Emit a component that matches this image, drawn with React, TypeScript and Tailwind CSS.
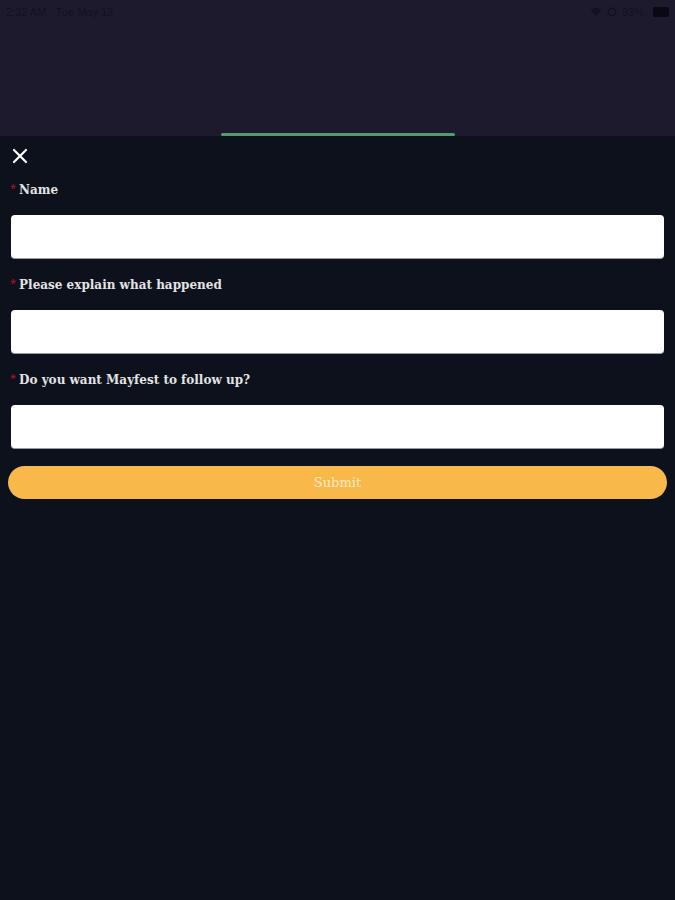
import React from "react";

const fields = ["Name", "Please explain what happened", "Do you want Mayfest to follow up?"];

const StatusBar = () => (
    <div className="flex h-6 items-center justify-between px-[6px] text-[11px] text-[#131020] font-['Liberation_Sans',sans-serif]">
        <span>2:32 AM&nbsp;&nbsp;&nbsp;Tue May 12</span>
        <div className="flex items-center gap-[5px]">
            <svg width="12" height="10" viewBox="0 0 12 10" fill="#131020">
                <path d="M6 9.5 0.5 3.2A8 8 0 0 1 11.5 3.2Z" />
            </svg>
            <svg width="10" height="10" viewBox="0 0 10 10" fill="none" stroke="#131020" strokeWidth="1.6">
                <circle cx="5" cy="5" r="3.6" />
            </svg>
            <span>93%</span>
            <div className="ml-1 h-[10px] w-[16px] rounded-[2px] bg-[#0a0812]" />
        </div>
    </div>
);

const Field = ({ label }: { label: string }) => (
    <div className="flex flex-col">
        <div className="flex items-start h-[22px] pl-[10px] gap-[3px]">
            <span className="text-[#b3121b] text-[11px] leading-[14px] mt-[1px]">*</span>
            <span className="text-[12px] leading-[20px] font-bold text-[#e3e3e3] font-['DejaVu_Serif',serif]">{label}</span>
        </div>
        <div className="mx-[11px] mt-[13px] h-[44px] rounded-[4px] bg-white border-b border-[#9a9a9a]" />
    </div>
);

export default function App() {
    return (
        <div className="flex h-[900px] w-[675px] flex-col bg-[#1e1a2e] overflow-hidden">
            <StatusBar />
            <div className="h-[112px]" />
            <div className="flex flex-1 flex-col bg-[#0d111b]">
                <div className="relative h-0">
                    <div className="absolute left-[221px] top-[-3px] h-[3px] w-[234px] rounded-full bg-[#4f9d6d]" />
                </div>
                <div className="flex h-[44px] items-start pl-[12px] pt-[12px]">
                    <svg width="16" height="16" viewBox="0 0 16 16" stroke="#ffffff" strokeWidth="2.2" strokeLinecap="round">
                        <path d="M2 2 14 14M14 2 2 14" />
                    </svg>
                </div>
                <div className="flex flex-col gap-[16px]">
                    {fields.map((f) => (
                        <Field key={f} label={f} />
                    ))}
                </div>
                <button className="mx-[8px] mt-[17px] h-[33px] rounded-full bg-[#f8b84a] text-[13px] text-[#fdebc4] font-['DejaVu_Serif',serif]">
                    Submit
                </button>
            </div>
        </div>
    );
}
